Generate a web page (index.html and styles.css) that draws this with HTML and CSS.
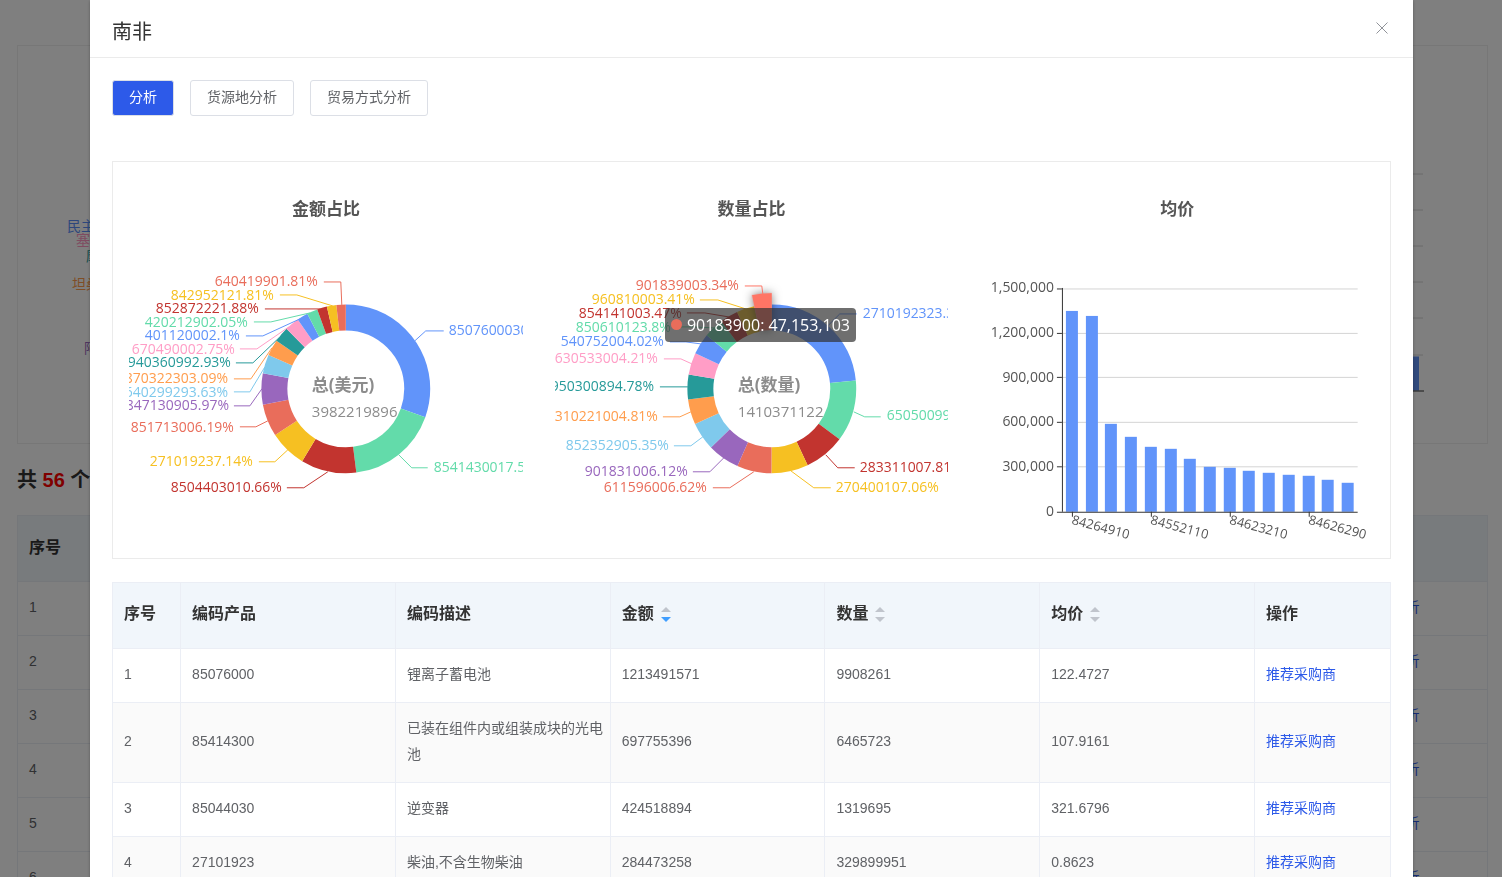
FILE: index.html
```html
<!DOCTYPE html>
<html lang="zh-CN">
<head>
<meta charset="utf-8">
<title>南非</title>
<link rel="stylesheet" href="styles.css">
</head>
<body>
<main class="page">
  <section class="page-charts">
    <svg class="page-chart" viewBox="0 0 396 396" aria-hidden="true">
      <g class="chart-label">
        <text x="49" y="184" fill="#5b8ff9">民主</text>
        <text x="58" y="198" fill="#ff99c3">塞</text>
        <text x="68" y="214" fill="#269a99">摩</text>
        <text x="54" y="242" fill="#ff9d4d">坦桑</text>
        <text x="66" y="306" fill="#9967bd">阿</text>
      </g>
    </svg>
    <svg class="page-chart" viewBox="0 0 396 396" aria-hidden="true">
      <path class="grid-line" d="M100 127.500H332M100 163.500H332M100 199.500H332M100 235.500H332M100 271.500H332M100 308.500H332"/>
      <rect class="bar" x="314" y="310" width="14" height="34"/>
      <path class="axis-line" d="M100 344.500H333"/>
    </svg>
  </section>
  <h2 class="page-count">共 <span class="count">56</span> 个</h2>
  <table class="grid page-grid">
    <colgroup><col class="col-index"><col><col class="col-link"></colgroup>
    <thead><tr><th>序号</th><th></th><th></th></tr></thead>
    <tbody>
      <tr><td>1</td><td></td><td><a href="#">分析</a></td></tr>
      <tr><td>2</td><td></td><td><a href="#">分析</a></td></tr>
      <tr><td>3</td><td></td><td><a href="#">分析</a></td></tr>
      <tr><td>4</td><td></td><td><a href="#">分析</a></td></tr>
      <tr><td>5</td><td></td><td><a href="#">分析</a></td></tr>
      <tr><td>6</td><td></td><td><a href="#">分析</a></td></tr>
    </tbody>
  </table>
</main>

<div class="overlay">
  <div class="dialog" role="dialog" aria-modal="true" aria-labelledby="dialog-title">
    <header class="dialog-head">
      <h1 class="dialog-title" id="dialog-title">南非</h1>
      <button class="close" type="button" aria-label="关闭">
        <svg viewBox="0 0 12 12" width="12" height="12"><path d="M0.500 0.500L11.500 11.500M11.500 0.500L0.500 11.500"/></svg>
      </button>
    </header>
    <div class="dialog-body">
      <div class="tabs">
        <button class="tab tab-active" type="button">分析</button>
        <button class="tab" type="button">货源地分析</button>
        <button class="tab" type="button">贸易方式分析</button>
      </div>

      <section class="charts">
        <figure class="chart">
          <figcaption class="chart-title">金额占比</figcaption>
          <div class="plot">
            <svg class="plot-svg" viewBox="-217 -147 394 300">
              <g class="ring" transform="rotate(-90)">
                <circle r="71.500" pathLength="100" stroke="#6194fa" stroke-dasharray="30.47 100"/>
                <circle r="71.500" pathLength="100" stroke="#63dbaa" stroke-dasharray="17.52 100" stroke-dashoffset="-30.47"/>
                <circle r="71.500" pathLength="100" stroke="#c2342f" stroke-dasharray="10.66 100" stroke-dashoffset="-47.99"/>
                <circle r="71.500" pathLength="100" stroke="#f6c022" stroke-dasharray="7.14 100" stroke-dashoffset="-58.65"/>
                <circle r="71.500" pathLength="100" stroke="#e96d5b" stroke-dasharray="6.19 100" stroke-dashoffset="-65.79"/>
                <circle r="71.500" pathLength="100" stroke="#9967bd" stroke-dasharray="5.97 100" stroke-dashoffset="-71.98"/>
                <circle r="71.500" pathLength="100" stroke="#7fc9ec" stroke-dasharray="3.63 100" stroke-dashoffset="-77.95"/>
                <circle r="71.500" pathLength="100" stroke="#ff9d4d" stroke-dasharray="3.09 100" stroke-dashoffset="-81.58"/>
                <circle r="71.500" pathLength="100" stroke="#269a99" stroke-dasharray="2.93 100" stroke-dashoffset="-84.67"/>
                <circle r="71.500" pathLength="100" stroke="#ff9dc6" stroke-dasharray="2.75 100" stroke-dashoffset="-87.6"/>
                <circle r="71.500" pathLength="100" stroke="#6194fa" stroke-dasharray="2.1 100" stroke-dashoffset="-90.35"/>
                <circle r="71.500" pathLength="100" stroke="#63dbaa" stroke-dasharray="2.05 100" stroke-dashoffset="-92.45"/>
                <circle r="71.500" pathLength="100" stroke="#c2342f" stroke-dasharray="1.88 100" stroke-dashoffset="-94.5"/>
                <circle r="71.500" pathLength="100" stroke="#f6c022" stroke-dasharray="1.81 100" stroke-dashoffset="-96.38"/>
                <circle r="71.500" pathLength="100" stroke="#e96d5b" stroke-dasharray="1.81 100" stroke-dashoffset="-98.19"/>
              </g>
              <g class="leader">
                <path stroke="#6194fa" d="M69 -48L80 -58H98"/>
                <path stroke="#63dbaa" d="M53 66L66 79H82"/>
                <path stroke="#c2342f" d="M-18 83L-42 99H-59"/>
                <path stroke="#f6c022" d="M-58 61L-71 73H-87"/>
                <path stroke="#e96d5b" d="M-78 32L-90 38H-106"/>
                <path stroke="#9967bd" d="M-84 0L-96 17H-112"/>
                <path stroke="#7fc9ec" d="M-81 -22L-96 3H-112"/>
                <path stroke="#ff9d4d" d="M-74 -41L-95 -10H-112"/>
                <path stroke="#269a99" d="M-67 -51L-93 -26H-110"/>
                <path stroke="#ff9dc6" d="M-57 -62L-89 -40H-106"/>
                <path stroke="#6194fa" d="M-46 -70L-83 -53H-100"/>
                <path stroke="#63dbaa" d="M-36 -76L-75 -67H-92"/>
                <path stroke="#c2342f" d="M-25 -80H-81"/>
                <path stroke="#f6c022" d="M-13 -83L-49 -94H-66"/>
                <path stroke="#e96d5b" d="M-4 -84L-5 -107H-22"/>
              </g>
              <g class="chart-label">
                <text x="103" y="-54" fill="#6194fa">8507600030.47%</text>
                <text x="88" y="83" fill="#63dbaa">8541430017.52%</text>
              </g>
              <g class="chart-label label-left">
                <text x="-64" y="103" fill="#c2342f">8504403010.66%</text>
                <text x="-93" y="77" fill="#f6c022">271019237.14%</text>
                <text x="-112" y="43" fill="#e96d5b">851713006.19%</text>
                <text x="-117" y="21" fill="#9967bd">847130905.97%</text>
                <text x="-118" y="8" fill="#7fc9ec">640299293.63%</text>
                <text x="-118" y="-6" fill="#ff9d4d">870322303.09%</text>
                <text x="-115" y="-22" fill="#269a99">940360992.93%</text>
                <text x="-111" y="-35" fill="#ff9dc6">670490002.75%</text>
                <text x="-106" y="-49" fill="#6194fa">401120002.1%</text>
                <text x="-98" y="-62" fill="#63dbaa">420212902.05%</text>
                <text x="-87" y="-76" fill="#c2342f">852872221.88%</text>
                <text x="-72" y="-89" fill="#f6c022">842952121.81%</text>
                <text x="-28" y="-103" fill="#e96d5b">640419901.81%</text>
              </g>
              <text class="total-name" x="-34" y="2">总(美元)</text>
              <text class="total-value" x="-34" y="28">3982219896</text>
            </svg>
          </div>
        </figure>

        <figure class="chart">
          <figcaption class="chart-title">数量占比</figcaption>
          <div class="plot">
            <svg class="plot-svg" viewBox="-217 -147 394 300">
              <g class="ring" transform="rotate(-90)">
                <circle r="71.500" pathLength="100" stroke="#6194fa" stroke-dasharray="23.39 100"/>
                <circle r="71.500" pathLength="100" stroke="#63dbaa" stroke-dasharray="11.81 100" stroke-dashoffset="-23.39"/>
                <circle r="71.500" pathLength="100" stroke="#c2342f" stroke-dasharray="7.81 100" stroke-dashoffset="-35.2"/>
                <circle r="71.500" pathLength="100" stroke="#f6c022" stroke-dasharray="7.06 100" stroke-dashoffset="-43.01"/>
                <circle r="71.500" pathLength="100" stroke="#e96d5b" stroke-dasharray="6.62 100" stroke-dashoffset="-50.07"/>
                <circle r="71.500" pathLength="100" stroke="#9967bd" stroke-dasharray="6.12 100" stroke-dashoffset="-56.69"/>
                <circle r="71.500" pathLength="100" stroke="#7fc9ec" stroke-dasharray="5.35 100" stroke-dashoffset="-62.81"/>
                <circle r="71.500" pathLength="100" stroke="#ff9d4d" stroke-dasharray="4.81 100" stroke-dashoffset="-68.16"/>
                <circle r="71.500" pathLength="100" stroke="#269a99" stroke-dasharray="4.78 100" stroke-dashoffset="-72.97"/>
                <circle r="71.500" pathLength="100" stroke="#ff9dc6" stroke-dasharray="4.21 100" stroke-dashoffset="-77.75"/>
                <circle r="71.500" pathLength="100" stroke="#6194fa" stroke-dasharray="4.02 100" stroke-dashoffset="-81.96"/>
                <circle r="71.500" pathLength="100" stroke="#63dbaa" stroke-dasharray="3.8 100" stroke-dashoffset="-85.98"/>
                <circle r="71.500" pathLength="100" stroke="#c2342f" stroke-dasharray="3.47 100" stroke-dashoffset="-89.78"/>
                <circle r="71.500" pathLength="100" stroke="#f6c022" stroke-dasharray="3.41 100" stroke-dashoffset="-93.25"/>
                <circle class="slice-hover" r="77.500" pathLength="100" stroke="#ff7565" stroke-dasharray="3.34 100" stroke-dashoffset="-96.66"/>
              </g>
              <g class="leader">
                <path stroke="#6194fa" d="M56 -63L68 -75H85"/>
                <path stroke="#63dbaa" d="M82 23L93 28H109"/>
                <path stroke="#c2342f" d="M54 66L66 79H83"/>
                <path stroke="#f6c022" d="M19 82L42 99H59"/>
                <path stroke="#e96d5b" d="M-18 83L-42 99H-59"/>
                <path stroke="#9967bd" d="M-48 69L-62 83H-79"/>
                <path stroke="#7fc9ec" d="M-69 48L-81 57H-98"/>
                <path stroke="#ff9d4d" d="M-81 23L-92 28H-109"/>
                <path stroke="#269a99" d="M-84 -2H-112"/>
                <path stroke="#ff9dc6" d="M-80 -25L-91 -30H-108"/>
                <path stroke="#6194fa" d="M-71 -45L-86 -47H-102"/>
                <path stroke="#63dbaa" d="M-58 -61L-79 -62H-96"/>
                <path stroke="#c2342f" d="M-43 -72L-67 -76H-85"/>
                <path stroke="#f6c022" d="M-26 -80L-54 -89H-72"/>
                <path stroke="#ff7565" d="M-9 -95L-10 -103H-27"/>
              </g>
              <g class="chart-label">
                <text x="91" y="-71" fill="#6194fa">2710192323.39%</text>
                <text x="115" y="31" fill="#63dbaa">6505009911.81%</text>
                <text x="88" y="83" fill="#c2342f">283311007.81%</text>
                <text x="64" y="103" fill="#f6c022">270400107.06%</text>
              </g>
              <g class="chart-label label-left">
                <text x="-65" y="103" fill="#e96d5b">611596006.62%</text>
                <text x="-84" y="87" fill="#9967bd">901831006.12%</text>
                <text x="-103" y="61" fill="#7fc9ec">852352905.35%</text>
                <text x="-114" y="32" fill="#ff9d4d">310221004.81%</text>
                <text x="-118" y="2" fill="#269a99">950300894.78%</text>
                <text x="-114" y="-26" fill="#ff9dc6">630533004.21%</text>
                <text x="-108" y="-43" fill="#6194fa">540752004.02%</text>
                <text x="-101" y="-57" fill="#63dbaa">850610123.8%</text>
                <text x="-90" y="-71" fill="#c2342f">854141003.47%</text>
                <text x="-77" y="-85" fill="#f6c022">960810003.41%</text>
                <text x="-33" y="-99" fill="#e96d5b">901839003.34%</text>
              </g>
              <text class="total-name" x="-34" y="2">总(数量)</text>
              <text class="total-value" x="-34" y="28">1410371122</text>
            </svg>
            <div class="tooltip"><span class="tooltip-dot"></span>90183900: 47,153,103</div>
          </div>
        </figure>

        <figure class="chart">
          <figcaption class="chart-title">均价</figcaption>
          <div class="plot">
            <svg class="plot-svg" viewBox="0 0 394 300">
              <path class="grid-line" d="M82 47H378M82 91.500H378M82 135.500H378M82 180.500H378M82 225H378"/>
              <g class="bar">
                <rect x="86" y="69" width="12" height="201"/>
                <rect x="106" y="74" width="12" height="196"/>
                <rect x="125" y="182" width="12" height="88"/>
                <rect x="145" y="195" width="12" height="75"/>
                <rect x="165" y="205" width="12" height="65"/>
                <rect x="185" y="207" width="12" height="63"/>
                <rect x="204" y="217" width="12" height="53"/>
                <rect x="224" y="225" width="12" height="45"/>
                <rect x="244" y="226" width="12" height="44"/>
                <rect x="263" y="229" width="12" height="41"/>
                <rect x="283" y="231" width="12" height="39"/>
                <rect x="303" y="233" width="12" height="37"/>
                <rect x="323" y="234" width="12" height="36"/>
                <rect x="342" y="238" width="12" height="32"/>
                <rect x="362" y="241" width="12" height="29"/>
              </g>
              <path class="axis-line" d="M82.500 46V270M77 270.500H378M77 47H82M77 91.500H82M77 135.500H82M77 180.500H82M77 225H82M92.500 270V275M171.500 270V275M250.500 270V275M329.500 270V275"/>
              <g class="axis-label label-left">
                <text x="74" y="50">1,500,000</text>
                <text x="74" y="95">1,200,000</text>
                <text x="74" y="140">900,000</text>
                <text x="74" y="184">600,000</text>
                <text x="74" y="229">300,000</text>
                <text x="74" y="274">0</text>
              </g>
              <g class="axis-label axis-label-x">
                <text transform="translate(91 282) rotate(15)">84264910</text>
                <text transform="translate(170 282) rotate(15)">84552110</text>
                <text transform="translate(249 282) rotate(15)">84623210</text>
                <text transform="translate(328 282) rotate(15)">84626290</text>
              </g>
            </svg>
          </div>
        </figure>
      </section>

      <table class="grid">
        <colgroup><col class="col-index"><col><col><col><col><col><col class="col-action"></colgroup>
        <thead>
          <tr>
            <th>序号</th>
            <th>编码产品</th>
            <th>编码描述</th>
            <th aria-sort="descending"><button class="sort sort-desc" type="button">金额<span class="carets"></span></button></th>
            <th><button class="sort" type="button">数量<span class="carets"></span></button></th>
            <th><button class="sort" type="button">均价<span class="carets"></span></button></th>
            <th>操作</th>
          </tr>
        </thead>
        <tbody>
          <tr><td>1</td><td>85076000</td><td>锂离子蓄电池</td><td>1213491571</td><td>9908261</td><td>122.4727</td><td><a href="#">推荐采购商</a></td></tr>
          <tr><td>2</td><td>85414300</td><td>已装在组件内或组装成块的光电池</td><td>697755396</td><td>6465723</td><td>107.9161</td><td><a href="#">推荐采购商</a></td></tr>
          <tr><td>3</td><td>85044030</td><td>逆变器</td><td>424518894</td><td>1319695</td><td>321.6796</td><td><a href="#">推荐采购商</a></td></tr>
          <tr><td>4</td><td>27101923</td><td>柴油,不含生物柴油</td><td>284473258</td><td>329899951</td><td>0.8623</td><td><a href="#">推荐采购商</a></td></tr>
        </tbody>
      </table>
    </div>
  </div>
</div>
</body>
</html>
```
FILE: styles.css
```css
* {
  box-sizing: border-box;
}

body {
  margin: 0;
  height: 100vh;
  overflow: hidden;
  background: #fff;
  color: #606266;
  font: 14px/26px "Liberation Sans", "Noto Sans CJK SC", sans-serif;
}

button {
  font: inherit;
  color: inherit;
  cursor: pointer;
}

a {
  color: #2d5ae9;
  text-decoration: none;
}

/* Page under the dialog */
.page {
  padding: 45px 14px 0 17px;
}

.page-charts {
  display: flex;
  justify-content: space-between;
  border: 1px solid #eee;
}

.page-chart {
  display: block;
  width: 396px;
  height: 397px;
}

.page-count {
  margin: 24px 0 22px;
  color: #333;
  font-size: 20px;
  line-height: 25px;
}

.count {
  color: #f00;
}

/* Tables */
.grid {
  width: 100%;
  table-layout: fixed;
  border-collapse: collapse;
}

.grid th,
.grid td {
  border: 1px solid #ebeef5;
  padding: 12px 4px 15px 11px;
  text-align: left;
}

.grid th {
  height: 66px;
  padding-block: 0 2px;
  background: #f1f6fb;
  color: #333;
  font-size: 16px;
}

.dialog .grid tr:nth-child(even) td {
  background: #fafafa;
}

.page-grid th,
.page-grid td {
  border-width: 1px 0;
}

.page-grid {
  border: 1px solid #ebeef5;
}

.col-index {
  width: 68px;
}

.col-action {
  width: 136px;
}

.col-link {
  width: 107px;
}

/* Dialog */
.overlay {
  position: fixed;
  inset: 0;
  padding-left: 6%;
  overflow: hidden;
  background: rgba(0, 0, 0, 0.5);
}

.dialog {
  width: 93.7%;
  background: #fff;
  box-shadow: 0 1px 3px rgba(0, 0, 0, 0.3);
}

.dialog-head {
  display: flex;
  justify-content: space-between;
  align-items: center;
  height: 58px;
  padding: 6px 25px 0 22px;
  border-bottom: 1px solid #ebebeb;
}

.dialog-title {
  margin: 0;
  color: #333;
  font-size: 20px;
  font-weight: 400;
}

.close {
  display: flex;
  margin-bottom: 8px;
  padding: 0;
  border: 0;
  background: none;
}

.close svg {
  fill: none;
  stroke: #909399;
}

.dialog-body {
  padding: 22px;
}

.tabs {
  display: flex;
  gap: 16px;
}

.tab {
  display: flex;
  height: 36px;
  padding: 0 16px;
  border: 1px solid #dcdfe6;
  border-radius: 3px;
  background: #fff;
  line-height: 32px;
}

.tab-active {
  background: #2d5ae9;
  color: #fff;
}

/* Charts */
.charts {
  display: grid;
  grid-template-columns: repeat(3, 1fr);
  margin: 45px 0 23px;
  border: 1px solid #ebebeb;
}

.chart {
  margin: 0;
  padding: 36px 16px 16px;
}

.chart-title {
  padding-bottom: 20px;
  color: #555;
  font-size: 17px;
  font-weight: 700;
  line-height: 24px;
  text-align: center;
}

.plot {
  position: relative;
}

.plot-svg {
  display: block;
  width: 100%;
}

.ring {
  fill: none;
  stroke-width: 26px;
}

.ring .slice-hover {
  stroke-width: 37px;
  filter: drop-shadow(0 0 5px rgba(0, 0, 0, 0.5));
}

.leader {
  fill: none;
}

.chart-label,
.axis-label {
  font: 14px "Open Sans", "Noto Sans CJK SC", sans-serif;
}

.label-left {
  text-anchor: end;
}

.total-name {
  fill: #8c8c8c;
  font: 700 17px "Open Sans", "Noto Sans CJK SC", sans-serif;
}

.total-value {
  fill: #8c8c8c;
  font: 15px "Open Sans", sans-serif;
}

.axis-label {
  fill: #555;
}

.axis-label-x {
  font-size: 13px;
}

.grid-line {
  fill: none;
  stroke: #d4d4d4;
}

.axis-line {
  fill: none;
  stroke: #333;
}

.bar {
  fill: #6194fa;
}

.tooltip {
  position: absolute;
  left: 28%;
  top: 22%;
  display: flex;
  align-items: center;
  gap: 5px;
  height: 34px;
  padding: 0 6px;
  border-radius: 4px;
  background: rgba(50, 50, 50, 0.7);
  color: #fff;
  font: 16px/34px "Open Sans", sans-serif;
  white-space: nowrap;
}

.tooltip-dot {
  width: 11px;
  height: 11px;
  border-radius: 50%;
  background: #e96d5b;
}

/* Sortable column heads */
.sort {
  display: flex;
  align-items: center;
  gap: 7px;
  padding: 0;
  border: 0;
  background: none;
}

.carets {
  display: grid;
  gap: 5px;
}

.carets::before,
.carets::after {
  content: "";
  border: 5px solid transparent;
}

.carets::before {
  border-top-width: 0;
  border-bottom-color: #c0c4cc;
}

.carets::after {
  border-bottom-width: 0;
  border-top-color: #c0c4cc;
}

.sort-desc .carets::after {
  border-top-color: #409eff;
}
```
